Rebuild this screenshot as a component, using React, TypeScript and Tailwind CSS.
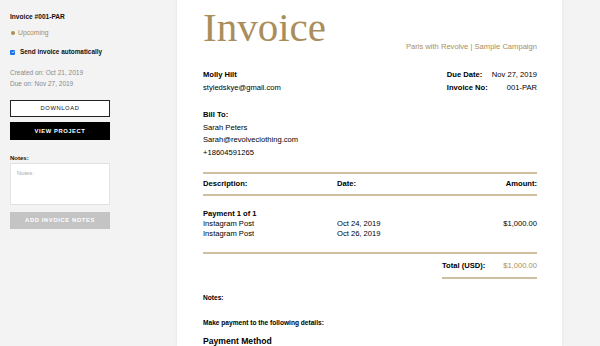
const font = { fontFamily: '"Liberation Sans", Arial, sans-serif' };

const items = [
  { desc: "Instagram Post", date: "Oct 24, 2019", amount: "$1,000.00" },
  { desc: "Instagram Post", date: "Oct 26, 2019", amount: "" },
];

export default function App() {
  return (
    <div className="flex h-[346px] w-[600px] overflow-hidden bg-[#f3f3f3] text-[#111]" style={font}>
      <Sidebar />
      <InvoiceSheet />
    </div>
  );
}

function Sidebar() {
  return (
    <div className="w-[177px] shrink-0 pl-[10px] pt-[13px]">
      <p className="text-[6.6px] font-bold leading-[8px]">Invoice #001-PAR</p>
      <div className="mt-[8px] flex items-center gap-[3px] text-[6.8px] leading-[8px] text-[#a98e5c]">
        <span className="ml-[1px] h-[4px] w-[4px] rounded-full bg-[#a98e5c]" />
        <span>Upcoming</span>
      </div>
      <div className="mt-[11px] flex items-center gap-[5px] text-[6.4px] font-bold leading-[8px]">
        <span className="flex h-[5px] w-[5px] items-center justify-center rounded-[1px] bg-[#1a73e8]">
          <svg viewBox="0 0 10 10" className="h-[4px] w-[4px]">
            <path d="M2 5.2 L4.2 7.4 L8 2.8" stroke="white" strokeWidth="1.8" fill="none" />
          </svg>
        </span>
        <span>Send invoice automatically</span>
      </div>
      <div className="mt-[13px] space-y-[3px] text-[6.5px] leading-[8px] text-[#8a8a8a]">
        <p>Created on: Oct 21, 2019</p>
        <p>Due on: Nov 27, 2019</p>
      </div>
      <button className="mt-[12px] flex h-[17px] w-[100px] items-center justify-center border border-[#222] bg-white text-[5.8px] tracking-[0.6px]">
        DOWNLOAD
      </button>
      <button className="mt-[5px] flex h-[18px] w-[100px] items-center justify-center bg-black text-[5.8px] font-bold tracking-[0.6px] text-white">
        VIEW PROJECT
      </button>
      <p className="mt-[14px] text-[6px] font-bold leading-[8px]">Notes:</p>
      <div className="mt-[1px] h-[42px] w-[100px] border border-[#e2e2e2] bg-white px-[6px] pt-[5px] text-[5.8px] text-[#aaa]">
        Notes:
      </div>
      <button className="mt-[7px] flex h-[17px] w-[100px] items-center justify-center bg-[#c4c4c4] text-[5.8px] font-bold tracking-[0.6px] text-white">
        ADD INVOICE NOTES
      </button>
    </div>
  );
}

function InvoiceSheet() {
  return (
    <div className="w-[385px] shrink-0 bg-white pl-[26px] pr-[25px] text-[7.6px] text-black shadow-[0_0_3px_rgba(0,0,0,0.08)]">
      {/* Title and campaign */}
      <div className="flex items-end justify-between pt-[6px]">
        <h1
          className="text-[41px] leading-[43px] text-[#a98e5c]"
          style={{ fontFamily: '"Liberation Serif", "Times New Roman", serif' }}
        >
          Invoice
        </h1>
        <p className="mb-[-3px] text-[7.6px] text-[#a98e5c]">Paris with Revolve | Sample Campaign</p>
      </div>

      {/* Sender and invoice meta */}
      <div className="mt-[19px] flex justify-between leading-[13px]">
        <div>
          <p className="font-bold">Molly Hilt</p>
          <p>styledskye@gmail.com</p>
        </div>
        <div className="grid grid-cols-[45px_auto] leading-[13px]">
          <span className="font-bold">Due Date:</span>
          <span className="text-right">Nov 27, 2019</span>
          <span className="font-bold">Invoice No:</span>
          <span className="text-right">001-PAR</span>
        </div>
      </div>

      {/* Bill to */}
      <div className="mt-[15px] leading-[12.7px]">
        <p className="font-bold">Bill To:</p>
        <p>Sarah Peters</p>
        <p>Sarah@revolveclothing.com</p>
        <p>+18604591265</p>
      </div>

      {/* Table */}
      <div className="mt-[12px] h-[2px] bg-[#cdbf9f]" />
      <div className="grid h-[20px] grid-cols-[134px_1fr_auto] items-center font-bold">
        <span>Description:</span>
        <span>Date:</span>
        <span>Amount:</span>
      </div>
      <div className="h-[2px] bg-[#cdbf9f]" />

      <div className="pt-[13px] pb-[13px] leading-[10px]">
        <p className="font-bold">Payment 1 of 1</p>
        {items.map((item, i) => (
          <div key={i} className="grid grid-cols-[134px_1fr_auto]">
            <span>{item.desc}</span>
            <span>{item.date}</span>
            <span>{item.amount}</span>
          </div>
        ))}
      </div>
      <div className="h-[2px] bg-[#cdbf9f]" />

      <div className="flex justify-end">
        <div className="w-[95px]">
          <div className="flex h-[23px] items-center justify-between">
            <span className="font-bold">Total (USD):</span>
            <span className="text-[#a98e5c]">$1,000.00</span>
          </div>
          <div className="h-[2px] bg-[#cdbf9f]" />
        </div>
      </div>

      {/* Notes and payment */}
      <p className="mt-[14px] text-[6.6px] font-bold">Notes:</p>
      <p className="mt-[15px] text-[6.6px] font-bold">Make payment to the following details:</p>
      <p className="mt-[7px] text-[8.6px] font-bold">Payment Method</p>
    </div>
  );
}
